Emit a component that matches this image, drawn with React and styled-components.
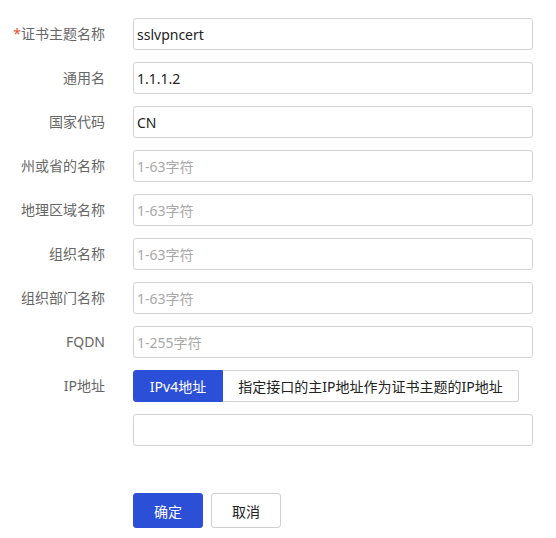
import React from "react";
import styled, { createGlobalStyle } from "styled-components";

const Global = createGlobalStyle`
  html, body { margin: 0; padding: 0; background: #fff; }
  body { font-family: "Microsoft YaHei", "Noto Sans", "Noto Sans CJK SC", sans-serif; font-size: 14px; }
  input::placeholder { color: #a8a8a8; }
`;

const Form = styled.div`
  padding-top: 18px;
  display: flex;
  flex-direction: column;
  gap: 12px;
`;

const Row = styled.div`
  display: grid;
  grid-template-columns: 105px 400px;
  column-gap: 28px;
  align-items: center;
  min-height: 32px;
`;

const Label = styled.div`
  text-align: right;
  color: #666;
  font-size: 14px;
  line-height: 20px;
  white-space: nowrap;
`;

const Star = styled.span`
  color: #e4532f;
`;

const Input = styled.input`
  box-sizing: border-box;
  width: 400px;
  height: 32px;
  border: 1px solid #d3d3d3;
  border-radius: 3px;
  padding: 0 3px;
  font-family: inherit;
  font-size: 14px;
  color: #222;
  outline: none;
  background: #fff;
`;

const Segmented = styled.div`
  display: inline-flex;
  height: 32px;
  box-sizing: border-box;
  width: 386px;
`;

const Seg = styled.button`
  box-sizing: border-box;
  height: 32px;
  font-family: inherit;
  font-size: 14px;
  cursor: pointer;
  padding: 0;
  border: 1px solid ${(p) => (p.$active ? "#2c4fd8" : "#d3d3d3")};
  background: ${(p) => (p.$active ? "#2c4fd8" : "#fff")};
  color: ${(p) => (p.$active ? "#fff" : "#222")};
  border-radius: ${(p) => (p.$first ? "3px 0 0 3px" : "0 3px 3px 0")};
  border-left-width: ${(p) => (p.$first ? "1px" : "0")};
  width: ${(p) => p.$w}px;
`;

const Actions = styled.div`
  display: flex;
  gap: 8px;
  padding-left: 133px;
  margin-top: 47px;
`;

const Button = styled.button`
  box-sizing: border-box;
  width: 70px;
  height: 35px;
  border-radius: 3px;
  font-family: inherit;
  font-size: 14px;
  cursor: pointer;
  border: 1px solid ${(p) => (p.$primary ? "#2c4fd8" : "#cfcfcf")};
  background: ${(p) => (p.$primary ? "#2c4fd8" : "#fff")};
  color: ${(p) => (p.$primary ? "#fff" : "#222")};
`;

const fields = [
  { label: "证书主题名称", required: true, value: "sslvpncert" },
  { label: "通用名", value: "1.1.1.2" },
  { label: "国家代码", value: "CN" },
  { label: "州或省的名称", placeholder: "1-63字符" },
  { label: "地理区域名称", placeholder: "1-63字符" },
  { label: "组织名称", placeholder: "1-63字符" },
  { label: "组织部门名称", placeholder: "1-63字符" },
  { label: "FQDN", placeholder: "1-255字符" },
];

export default function App() {
  return (
    <>
      <Global />
      <Form>
        {fields.map((f) => (
          <Row key={f.label}>
            <Label>
              {f.required && <Star>*</Star>}
              {f.label}
            </Label>
            <Input defaultValue={f.value} placeholder={f.placeholder} />
          </Row>
        ))}
        <Row>
          <Label>IP地址</Label>
          <Segmented>
            <Seg $active $first $w={90}>IPv4地址</Seg>
            <Seg $w={296}>指定接口的主IP地址作为证书主题的IP地址</Seg>
          </Segmented>
        </Row>
        <Row>
          <span />
          <Input />
        </Row>
      </Form>
      <Actions>
        <Button $primary>确定</Button>
        <Button>取消</Button>
      </Actions>
    </>
  );
}
